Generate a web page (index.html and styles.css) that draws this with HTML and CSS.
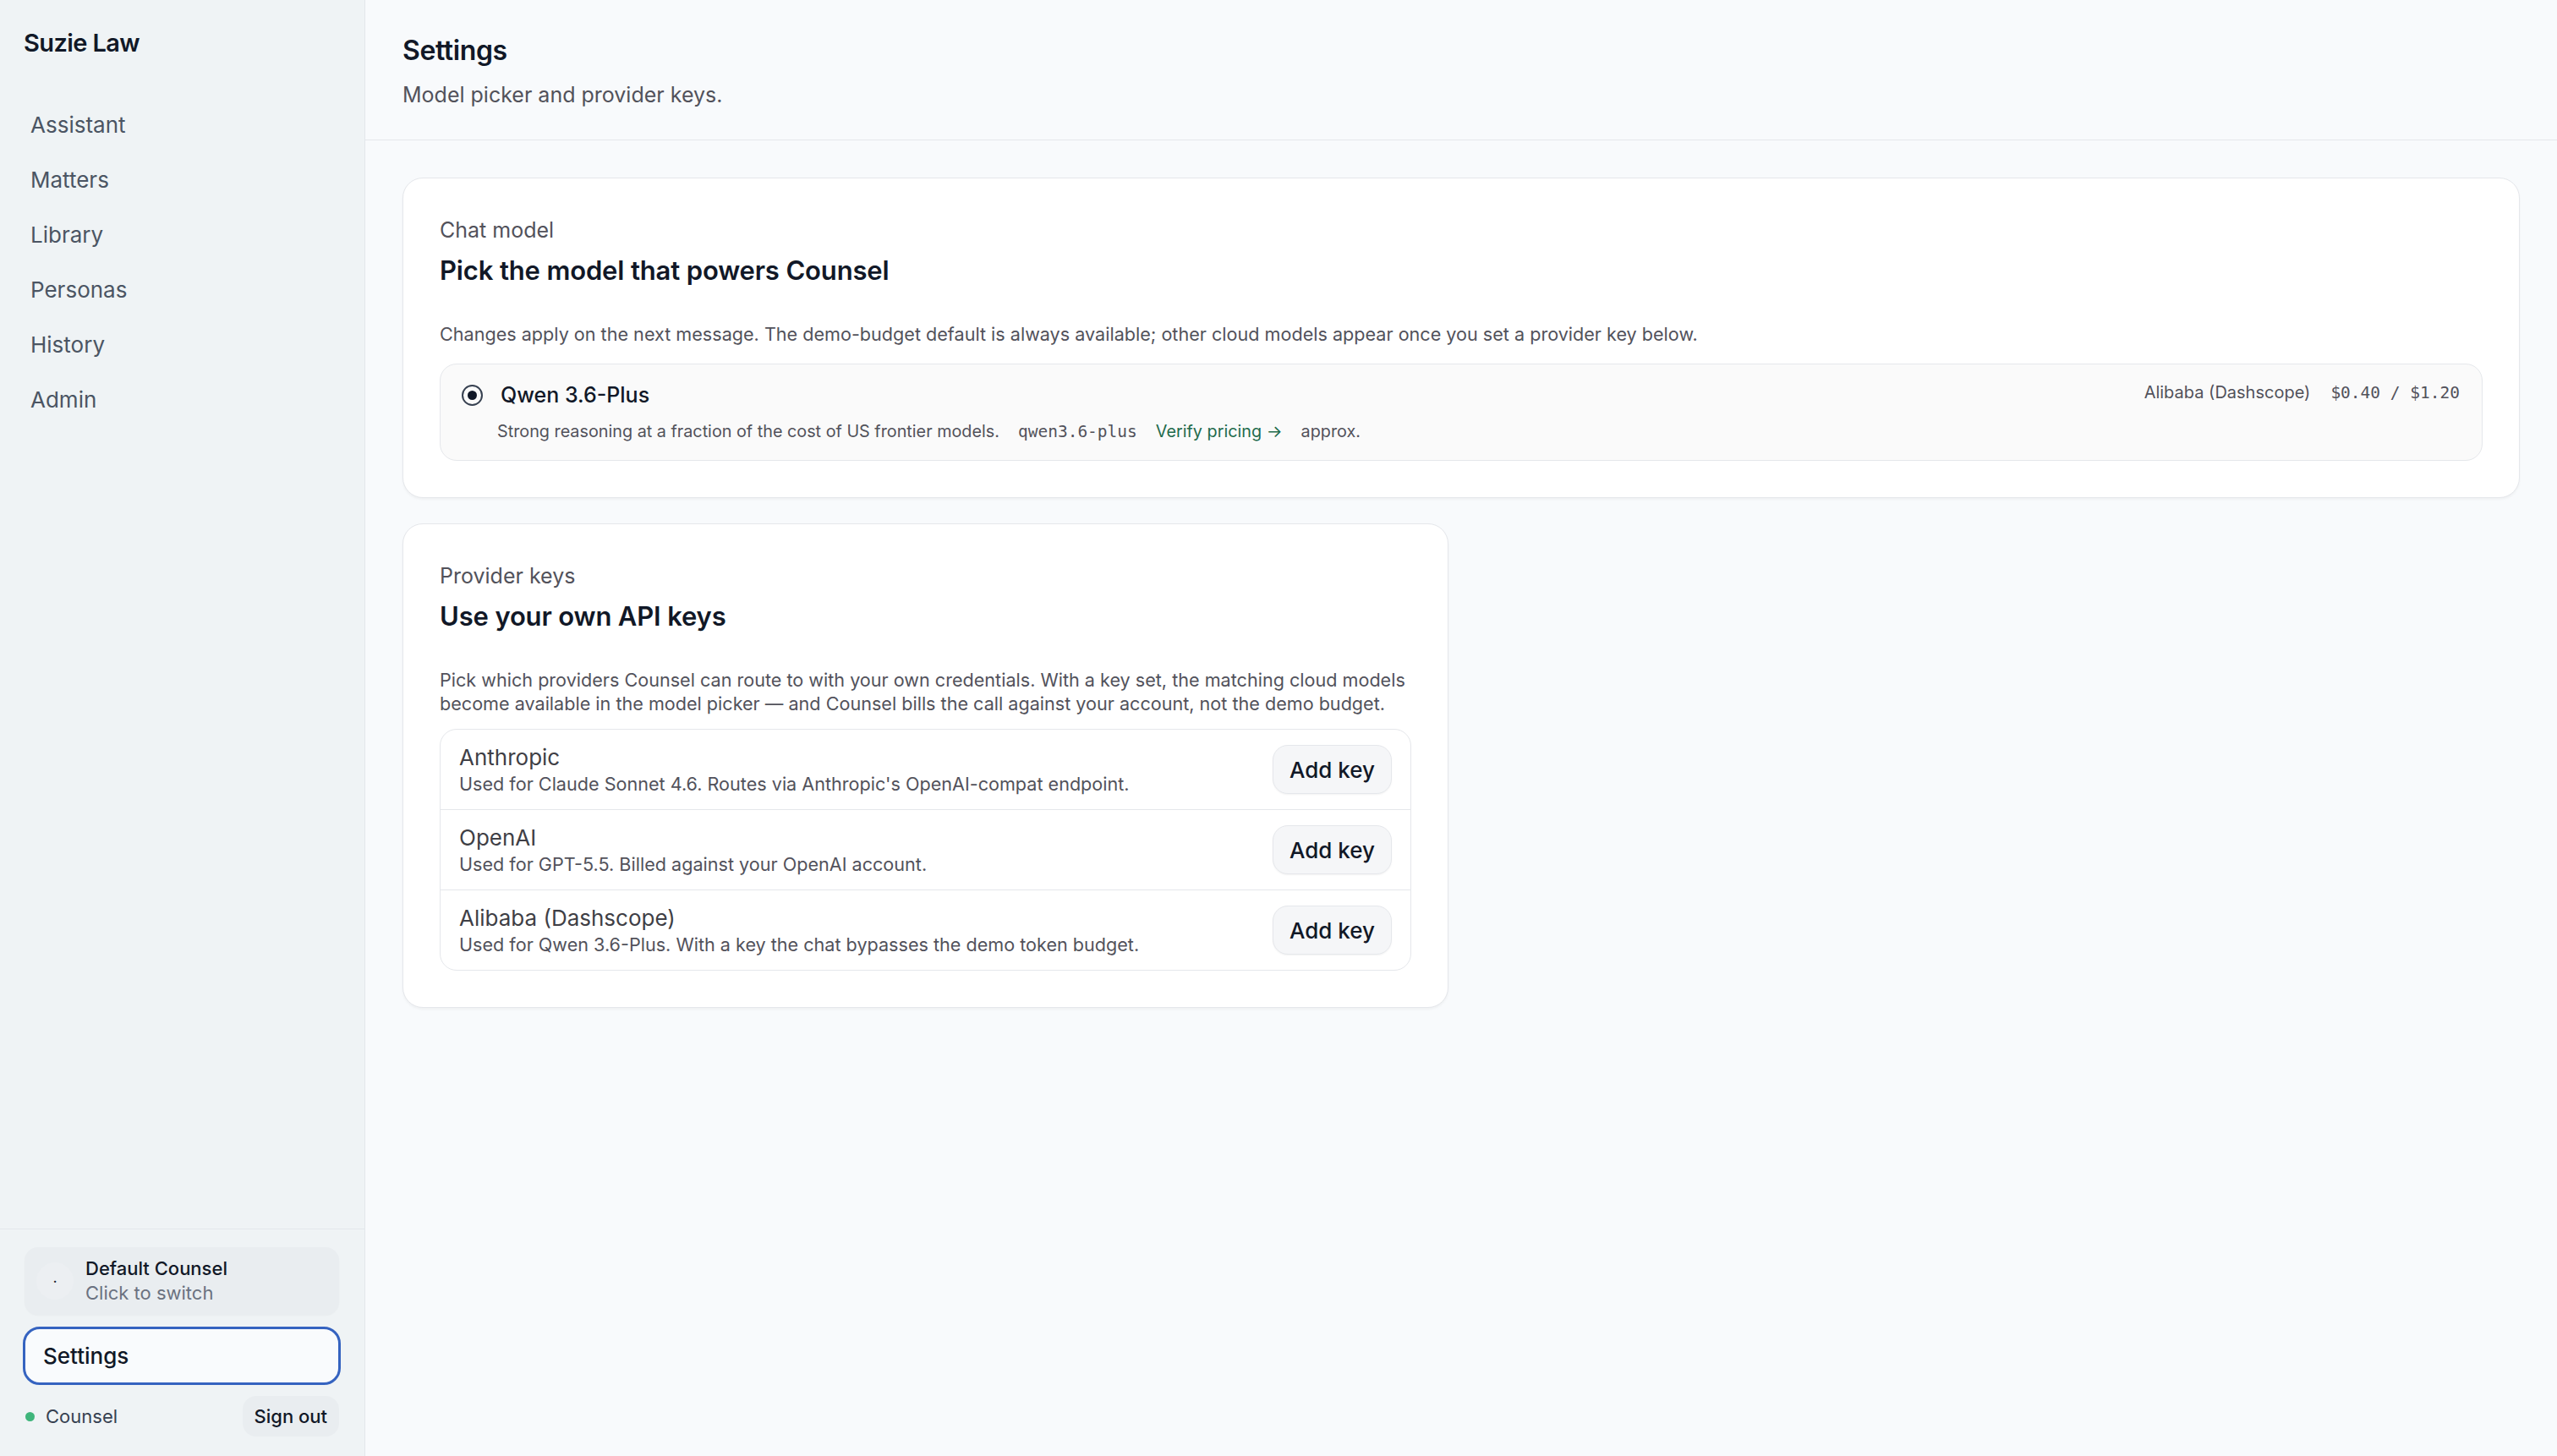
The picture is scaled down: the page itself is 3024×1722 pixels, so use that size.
FILE: index.html
```html
<!DOCTYPE html>
<html lang="en">
<head>
<meta charset="utf-8">
<title>Settings · Suzie Law</title>
<link rel="stylesheet" href="styles.css">
</head>
<body>
<div class="app">
  <aside class="sidebar">
    <div class="brand">Suzie Law</div>
    <nav class="nav">
      <a class="nav-item">Assistant</a>
      <a class="nav-item">Matters</a>
      <a class="nav-item">Library</a>
      <a class="nav-item">Personas</a>
      <a class="nav-item">History</a>
      <a class="nav-item">Admin</a>
    </nav>
    <div class="side-footer">
      <div class="persona">
        <div class="avatar">·</div>
        <div class="persona-text">
          <div class="persona-name">Default Counsel</div>
          <div class="persona-sub">Click to switch</div>
        </div>
      </div>
      <div class="settings-btn">Settings</div>
      <div class="user-row">
        <div class="user"><span class="dot"></span><span>Counsel</span></div>
        <div class="signout">Sign out</div>
      </div>
    </div>
  </aside>
  <main class="main">
    <header class="page-header">
      <h1 class="page-title">Settings</h1>
      <p class="page-sub">Model picker and provider keys.</p>
    </header>
    <div class="content">
      <section class="card card-wide">
        <div class="eyebrow">Chat model</div>
        <h2 class="card-title">Pick the model that powers Counsel</h2>
        <p class="card-desc desc-model">Changes apply on the next message. The demo-budget default is always available; other cloud models appear once you set a provider key below.</p>
        <div class="model-row">
          <div class="model-top">
            <span class="radio"><span class="radio-dot"></span></span>
            <span class="model-name">Qwen 3.6-Plus</span>
            <span class="model-meta"><span class="provider">Alibaba (Dashscope)</span><span class="mono price">$0.40 / $1.20</span></span>
          </div>
          <div class="model-bottom">
            <span>Strong reasoning at a fraction of the cost of US frontier models.</span>
            <span class="mono">qwen3.6-plus</span>
            <span class="link">Verify pricing →</span>
            <span>approx.</span>
          </div>
        </div>
      </section>
      <section class="card card-narrow">
        <div class="eyebrow">Provider keys</div>
        <h2 class="card-title">Use your own API keys</h2>
        <p class="card-desc desc-keys">Pick which providers Counsel can route to with your own credentials. With a key set, the matching cloud models become available in the model picker — and Counsel bills the call against your account, not the demo budget.</p>
        <div class="key-list">
          <div class="key-row">
            <div class="key-text">
              <div class="key-name">Anthropic</div>
              <div class="key-desc">Used for Claude Sonnet 4.6. Routes via Anthropic's OpenAI-compat endpoint.</div>
            </div>
            <button class="add-key">Add key</button>
          </div>
          <div class="key-row">
            <div class="key-text">
              <div class="key-name">OpenAI</div>
              <div class="key-desc">Used for GPT-5.5. Billed against your OpenAI account.</div>
            </div>
            <button class="add-key">Add key</button>
          </div>
          <div class="key-row">
            <div class="key-text">
              <div class="key-name">Alibaba (Dashscope)</div>
              <div class="key-desc">Used for Qwen 3.6-Plus. With a key the chat bypasses the demo token budget.</div>
            </div>
            <button class="add-key">Add key</button>
          </div>
        </div>
      </section>
    </div>
  </main>
</div>
</body>
</html>
```
FILE: styles.css
```css
* { box-sizing: border-box; }
html, body { margin: 0; padding: 0; }
body {
  font-family: Inter, "Noto Sans", "Liberation Sans", sans-serif;
  color: #111827;
  background: #f8fafc;
  -webkit-font-smoothing: antialiased;
}
.app {
  display: flex;
  width: 3024px;
  height: 1722px;
  overflow: hidden;
}

/* Sidebar */
.sidebar {
  width: 432px;
  flex: 0 0 432px;
  background: #eff3f5;
  border-right: 1px solid #e3e7eb;
  display: flex;
  flex-direction: column;
}
.brand {
  padding: 31px 28px 0;
  font-size: 29px;
  line-height: 40px;
  font-weight: 600;
  color: #111827;
  letter-spacing: -0.6px;
}
.nav {
  flex: 1;
  display: flex;
  flex-direction: column;
  padding: 44px 28px 0;
}
.nav-item {
  display: block;
  padding: 12px 8px;
  font-size: 26px;
  line-height: 41px;
  color: #4b5563;
}
.side-footer {
  border-top: 1px solid #e3e7eb;
  padding: 21px 30px 23px 29px;
  display: flex;
  flex-direction: column;
}
.persona {
  display: flex;
  align-items: center;
  gap: 14px;
  height: 80px;
  padding: 0 14px;
  background: #e9edf0;
  border-radius: 16px;
  box-shadow: 0 1px 2px rgba(0,0,0,0.03);
}
.avatar {
  width: 44px;
  height: 44px;
  border-radius: 50%;
  background: #eceff2;
  display: flex;
  align-items: center;
  justify-content: center;
  font-size: 18px;
  color: #111827;
}
.persona-name {
  font-size: 22px;
  line-height: 29px;
  font-weight: 500;
  color: #111827;
}
.persona-sub {
  font-size: 22px;
  line-height: 29px;
  color: #6b7280;
}
.settings-btn {
  margin: 14px -2px 0;
  height: 69px;
  border: 3px solid #3563c0;
  border-radius: 20px;
  background: #f9fbfd;
  display: flex;
  align-items: center;
  padding: 0 21px;
  font-size: 26px;
  font-weight: 500;
  color: #111827;
}
.user-row {
  margin-top: 13px;
  display: flex;
  align-items: center;
  justify-content: space-between;
}
.user {
  display: flex;
  align-items: center;
  gap: 13px;
  font-size: 22px;
  color: #374151;
  padding-left: 1px;
}
.dot {
  width: 11px;
  height: 11px;
  border-radius: 50%;
  background: #3fb57b;
}
.signout {
  height: 48px;
  padding: 0 14px;
  display: flex;
  align-items: center;
  background: #e9edf0;
  border-radius: 16px;
  font-size: 22px;
  font-weight: 500;
  color: #111827;
}

/* Main */
.main {
  flex: 1;
  display: flex;
  flex-direction: column;
  background: #f8fafc;
}
.page-header {
  padding: 40px 44px 35px;
  border-bottom: 1px solid #e5e7eb;
}
.page-title {
  margin: 0;
  font-size: 32px;
  line-height: 40px;
  font-weight: 600;
  color: #111827;
  letter-spacing: -0.4px;
}
.page-sub {
  margin: 14px 0 0;
  font-size: 25px;
  line-height: 36px;
  color: #52525b;
}
.content {
  padding: 44px 44px;
  display: flex;
  flex-direction: column;
  align-items: flex-start;
  gap: 30px;
}
.card {
  background: #fff;
  border: 1px solid #e5e7eb;
  border-radius: 24px;
  padding: 44px 43px 43px;
  box-shadow: 0 2px 3px rgba(0,0,0,0.04);
}
.card-wide { width: 100%; }
.card-narrow { width: 1237px; }
.eyebrow {
  font-size: 25px;
  line-height: 34px;
  color: #52525b;
}
.card-title {
  margin: 11px 0 0;
  font-size: 31px;
  line-height: 40px;
  font-weight: 600;
  color: #111827;
  letter-spacing: -0.15px;
}
.card-desc {
  margin: 41px 0 0;
  font-size: 21.6px;
  line-height: 28px;
  color: #52525b;
}
.desc-model { margin-bottom: 21px; }
.desc-keys { margin-bottom: 16px; }

.model-row {
  background: #fafafa;
  border: 1px solid #e5e7eb;
  border-radius: 20px;
  padding: 19px 26px 19px;
  display: flex;
  flex-direction: column;
  gap: 12px;
}
.model-top {
  display: flex;
  align-items: center;
  height: 34px;
}
.radio {
  width: 25px;
  height: 25px;
  border-radius: 50%;
  border: 2px solid #374151;
  display: flex;
  align-items: center;
  justify-content: center;
  margin-left: -1px;
  margin-right: 21px;
  flex: 0 0 25px;
}
.radio-dot {
  width: 11px;
  height: 11px;
  border-radius: 50%;
  background: #111827;
}
.model-name {
  font-size: 25px;
  font-weight: 500;
  color: #111827;
}
.model-meta {
  margin-left: auto;
  display: flex;
  align-items: center;
  gap: 24px;
  font-size: 20px;
  color: #52525b;
  position: relative;
  top: -3px;
}
.mono {
  font-family: "DejaVu Sans Mono", "Liberation Mono", monospace;
  font-size: 19.5px;
  color: #52525b;
}
.price { color: #52525b; }
.model-bottom {
  display: flex;
  align-items: baseline;
  gap: 22px;
  padding-left: 41px;
  font-size: 19.8px;
  line-height: 28px;
  color: #52525b;
}
.link { color: #1f6b4c; }

.key-list {
  border: 1px solid #e5e7eb;
  border-radius: 20px;
  overflow: hidden;
}
.key-row {
  display: flex;
  align-items: center;
  justify-content: space-between;
  padding: 16px 22px 16px 22px;
}
.key-row + .key-row { border-top: 1px solid #e5e7eb; }
.key-name {
  font-size: 26px;
  line-height: 34px;
  color: #3f3f46;
}
.key-desc {
  font-size: 21.6px;
  line-height: 28px;
  color: #52525b;
}
.add-key {
  font-family: inherit;
  width: 141px;
  height: 58px;
  border: 1px solid #e5e7eb;
  border-radius: 18px;
  background: #f5f6f8;
  font-size: 26px;
  font-weight: 500;
  color: #111827;
  box-shadow: 0 1px 2px rgba(0,0,0,0.05);
}
```
